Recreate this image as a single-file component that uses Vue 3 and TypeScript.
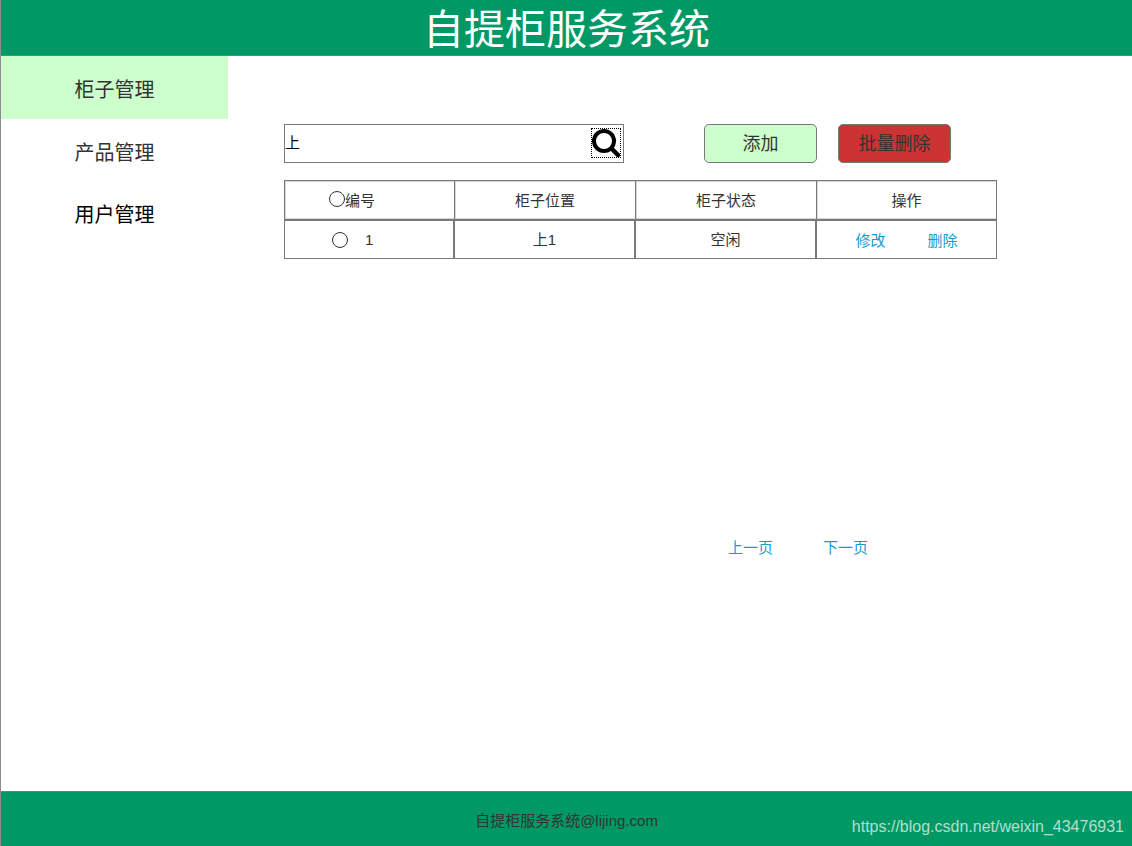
<script setup lang="ts">
import { ref } from 'vue'

interface MenuItem {
  label: string
  tone: string
}

interface Cabinet {
  id: number
  position: string
  status: string
}

const menu: MenuItem[] = [
  { label: '柜子管理', tone: 'active' },
  { label: '产品管理', tone: 'normal' },
  { label: '用户管理', tone: 'dark' },
]

const cabinets: Cabinet[] = [{ id: 1, position: '上1', status: '空闲' }]
const keyword = ref('上')
const selected = ref('')
</script>

<template>
  <div class="page">
    <header class="header">
      <h1>自提柜服务系统</h1>
    </header>

    <div class="body">
      <nav class="sidebar">
        <a v-for="item in menu" :key="item.label" href="#" :class="['menu-item', item.tone]">{{ item.label }}</a>
      </nav>

      <main class="main">
        <div class="toolbar">
          <form class="search" @submit.prevent>
            <input v-model="keyword" class="search-input" type="text" aria-label="搜索柜子" />
            <button class="search-button" type="submit" aria-label="搜索">
              <svg viewBox="0 0 28 28" width="28" height="28" aria-hidden="true">
                <circle cx="12" cy="12" r="10" fill="none" stroke="#000" stroke-width="4" />
                <path d="M19.5 19.5 L26 26" stroke="#000" stroke-width="4.5" stroke-linecap="round" />
              </svg>
            </button>
          </form>
          <button class="btn add" type="button">添加</button>
          <button class="btn remove" type="button">批量删除</button>
        </div>

        <table class="table">
          <colgroup>
            <col class="col-first" />
            <col />
            <col />
            <col />
          </colgroup>
          <thead>
            <tr>
              <th>
                <label class="pick pick-all">
                  <input v-model="selected" type="radio" name="cabinet" value="all" />
                  <span>编号</span>
                </label>
              </th>
              <th>柜子位置</th>
              <th>柜子状态</th>
              <th>操作</th>
            </tr>
          </thead>
          <tbody>
            <tr v-for="row in cabinets" :key="row.id">
              <td>
                <label class="pick pick-row">
                  <input v-model="selected" type="radio" name="cabinet" :value="String(row.id)" />
                  <span>{{ row.id }}</span>
                </label>
              </td>
              <td>{{ row.position }}</td>
              <td>{{ row.status }}</td>
              <td>
                <div class="actions">
                  <a href="#">修改</a>
                  <a href="#">删除</a>
                </div>
              </td>
            </tr>
          </tbody>
        </table>

        <nav class="pager" aria-label="分页">
          <a href="#">上一页</a>
          <a href="#">下一页</a>
        </nav>
      </main>
    </div>

    <footer class="footer">
      <span>自提柜服务系统@lijing.com</span>
      <span class="source">https://blog.csdn.net/weixin_43476931</span>
    </footer>
  </div>
</template>

<style>
body {
  margin: 0;
  background: #fff;
}
</style>

<style scoped>
.page {
  display: flex;
  flex-direction: column;
  box-sizing: border-box;
  min-height: 100vh;
  border-left: 1px solid #8c8c94;
  color: #333;
  font-family: "Liberation Sans", "Noto Sans CJK SC", sans-serif;
  font-size: 15px;
  font-weight: 400;
  line-height: 20px;
}

.header {
  display: flex;
  justify-content: center;
  align-items: center;
  box-sizing: border-box;
  height: 56px;
  padding-top: 4px;
  background: #009966;
  border-bottom: 1px solid #797979;
}

h1 {
  margin: 0;
  color: #fff;
  font-size: 41px;
  font-weight: 400;
  line-height: 50px;
}

.body {
  display: flex;
  flex: 1;
}

.sidebar {
  width: 227px;
  flex: none;
}

.menu-item {
  display: flex;
  justify-content: center;
  align-items: center;
  box-sizing: border-box;
  height: 62px;
  padding-top: 5px;
  color: #333;
  font-size: 20px;
  line-height: 28px;
  text-decoration: none;
}

.menu-item.active {
  height: 63px;
  background: #ccffcc;
}

.menu-item.dark {
  color: #000;
}

.main {
  flex: 1;
  min-width: 0;
  padding: 68px 135px 0 56px;
}

.toolbar {
  display: flex;
  height: 39px;
  padding-right: 46px;
  margin-bottom: 17px;
}

.search {
  display: flex;
  align-items: center;
  flex: 1;
  min-width: 0;
  box-sizing: border-box;
  margin-right: 80px;
  padding: 0 2px 2px 0;
  border: 1px solid #797979;
}

.search-input {
  flex: 1;
  min-width: 0;
  padding: 0;
  border: 0;
  outline: 0;
  background: none;
  color: #000;
  font: inherit;
}

.search-button {
  display: flex;
  box-sizing: border-box;
  width: 30px;
  height: 30px;
  padding: 0;
  border: 1px dotted #000;
  background: none;
}

.search-button svg {
  flex: none;
}

.btn {
  width: 113px;
  padding: 0;
  border: 1px solid #797979;
  border-radius: 5px;
  color: #333;
  font: inherit;
  font-size: 18px;
}

.add {
  margin-right: 21px;
  background: #ccffcc;
}

.remove {
  background: #cc3333;
}

.table {
  width: 100%;
  table-layout: fixed;
  border-collapse: separate;
  border-spacing: 0;
}

.col-first {
  width: 170px;
}

th,
td {
  box-sizing: border-box;
  padding: 0;
  border: 1px solid #797979;
  font-weight: 400;
  text-align: center;
}

th {
  height: 40px;
  padding-top: 2px;
  border-right-width: 0;
  box-shadow: inset 1px 1px #d7d7d7, inset 0 -1px #d7d7d7;
}

th:last-child {
  border-right-width: 1px;
}

td {
  height: 39px;
}

.pick {
  display: flex;
  align-items: center;
}

.pick-all {
  align-items: flex-start;
  padding-left: 44px;
}

.pick-row {
  gap: 17px;
  padding-left: 47px;
}

.pick input {
  appearance: none;
  flex: none;
  box-sizing: border-box;
  width: 16px;
  height: 16px;
  margin: 0;
  border: 1px solid #333;
  border-radius: 50%;
  background: #fff;
}

.pick input:checked {
  background: radial-gradient(#333 4px, #fff 5px);
}

.actions {
  display: flex;
  justify-content: center;
  gap: 42px;
  padding-top: 2px;
}

.actions a,
.pager a {
  color: #169bd5;
  text-decoration: none;
}

.pager {
  display: flex;
  justify-content: flex-end;
  gap: 50px;
  margin-top: 279px;
  padding-right: 129px;
}

.footer {
  position: relative;
  display: flex;
  justify-content: center;
  align-items: center;
  box-sizing: border-box;
  height: 55px;
  padding-top: 4px;
  background: #009966;
  border-top: 1px solid #797979;
}

.source {
  position: absolute;
  right: 8px;
  bottom: 9px;
  color: rgba(255, 255, 255, 0.7);
  font-size: 16px;
}
</style>
